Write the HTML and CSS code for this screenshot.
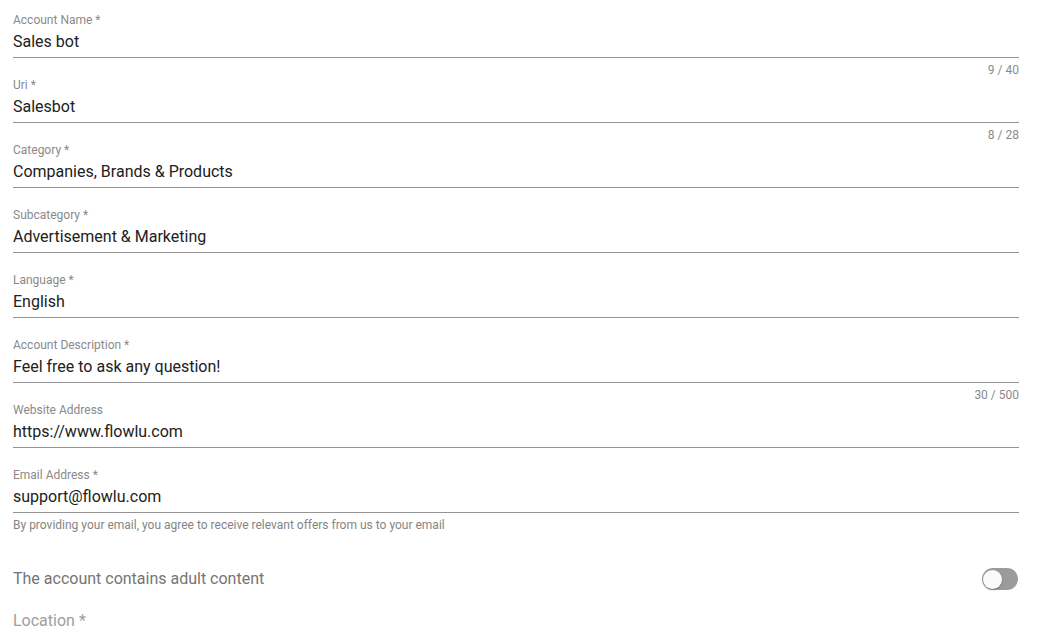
FILE: index.html
```html
<!DOCTYPE html>
<html>
<head>
<meta charset="utf-8">
<link rel="stylesheet" href="styles.css">
</head>
<body>
<form class="form">
  <div class="field">
    <label class="label">Account Name *</label>
    <div class="value">Sales bot</div>
    <div class="details"><span class="hint"></span><span class="counter">9 / 40</span></div>
  </div>
  <div class="field">
    <label class="label">Uri *</label>
    <div class="value">Salesbot</div>
    <div class="details"><span class="hint"></span><span class="counter">8 / 28</span></div>
  </div>
  <div class="field">
    <label class="label">Category *</label>
    <div class="value">Companies, Brands &amp; Products</div>
    <div class="details"></div>
  </div>
  <div class="field">
    <label class="label">Subcategory *</label>
    <div class="value">Advertisement &amp; Marketing</div>
    <div class="details"></div>
  </div>
  <div class="field">
    <label class="label">Language *</label>
    <div class="value">English</div>
    <div class="details"></div>
  </div>
  <div class="field">
    <label class="label">Account Description *</label>
    <div class="value">Feel free to ask any question!</div>
    <div class="details"><span class="hint"></span><span class="counter">30 / 500</span></div>
  </div>
  <div class="field">
    <label class="label">Website Address</label>
    <div class="value">https://www.flowlu.com</div>
    <div class="details"></div>
  </div>
  <div class="field">
    <label class="label">Email Address *</label>
    <div class="value">support@flowlu.com</div>
    <div class="details"><span class="hint">By providing your email, you agree to receive relevant offers from us to your email</span></div>
  </div>
  <div class="switch-row">
    <span class="switch-label">The account contains adult content</span>
    <span class="switch"><span class="knob"></span></span>
  </div>
  <div class="location">Location *</div>
</form>
</body>
</html>
```
FILE: styles.css
```css
html, body {
  margin: 0;
  padding: 0;
  background: #ffffff;
  font-family: Roboto, "Liberation Sans", Arial, sans-serif;
  overflow: hidden;
}
.form {
  padding: 12px 26px 0 13px;
  display: flex;
  flex-direction: column;
}
.field {
  display: flex;
  flex-direction: column;
  height: 65px;
}
.label {
  font-size: 12px;
  line-height: 16px;
  height: 16px;
  color: #8a8a8a;
}
.value {
  margin-top: 3px;
  padding-top: 1px;
  font-size: 16px;
  line-height: 20px;
  height: 20px;
  color: #212121;
  padding-bottom: 5px;
  border-bottom: 1px solid #949494;
}
.details {
  display: flex;
  justify-content: space-between;
  padding-top: 5px;
  height: 14px;
  font-size: 12px;
  line-height: 14px;
  color: #858585;
}
.counter {
  color: #8a8a8a;
}
.switch-row {
  margin-top: 36px;
  display: flex;
  justify-content: space-between;
  align-items: center;
  height: 22px;
}
.switch-label {
  font-size: 16px;
  line-height: 20px;
  color: #757575;
}
.switch {
  width: 36px;
  height: 22px;
  margin-right: 1px;
  border-radius: 11px;
  background: #9b9b9b;
  display: flex;
  align-items: center;
  padding: 0 1px;
  box-sizing: border-box;
}
.knob {
  width: 19px;
  height: 19px;
  border-radius: 50%;
  background: #fafafa;
  box-shadow: 0 1px 2px rgba(0,0,0,0.25);
}
.location {
  margin-top: 21px;
  font-size: 16px;
  line-height: 20px;
  color: #9e9e9e;
}
```
